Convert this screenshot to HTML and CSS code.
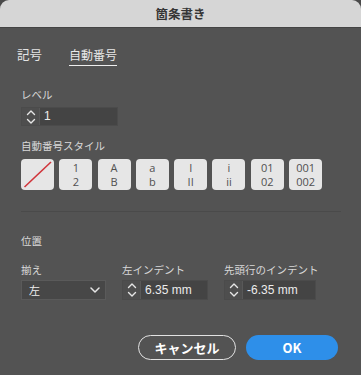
FILE: index.html
```html
<!DOCTYPE html>
<html lang="ja">
<head>
<meta charset="utf-8">
<link rel="stylesheet" href="styles.css">
</head>
<body>
<div class="dialog">
  <div class="titlebar">箇条書き</div>
  <div class="tabs">
    <span class="tab">記号</span>
    <span class="tab active">自動番号</span>
  </div>
  <div class="content">
    <div class="label level-label">レベル</div>
    <div class="stepper level-stepper">
      <span class="arrows"><svg width="10" height="16" viewBox="0 0 10 16"><path d="M1.5 5.5 L5 2 L8.5 5.5 M1.5 10.5 L5 14 L8.5 10.5" fill="none" stroke="#e6e6e6" stroke-width="1.4" stroke-linecap="round" stroke-linejoin="round"/></svg></span>
      <span class="field">1</span>
    </div>
    <div class="label style-label">自動番号スタイル</div>
    <div class="styles">
      <div class="sbtn none"><svg width="33" height="31" viewBox="0 0 33 31"><line x1="3.5" y1="28" x2="30" y2="3" stroke="#d0343a" stroke-width="1.6"/></svg></div>
      <div class="sbtn"><span>1</span><span>2</span></div>
      <div class="sbtn"><span>A</span><span>B</span></div>
      <div class="sbtn"><span>a</span><span>b</span></div>
      <div class="sbtn"><span>I</span><span>II</span></div>
      <div class="sbtn"><span>i</span><span>ii</span></div>
      <div class="sbtn"><span>01</span><span>02</span></div>
      <div class="sbtn"><span>001</span><span>002</span></div>
    </div>
    <div class="divider"></div>
    <div class="label pos-label">位置</div>
    <div class="controls">
      <div class="group">
        <div class="label small">揃え</div>
        <div class="select"><span>左</span><svg width="10" height="6" viewBox="0 0 10 6"><path d="M1 1 L5 5 L9 1" fill="none" stroke="#e6e6e6" stroke-width="1.5" stroke-linecap="round" stroke-linejoin="round"/></svg></div>
      </div>
      <div class="group">
        <div class="label small">左インデント</div>
        <div class="stepper w86">
          <span class="arrows"><svg width="10" height="16" viewBox="0 0 10 16"><path d="M1.5 5.5 L5 2 L8.5 5.5 M1.5 10.5 L5 14 L8.5 10.5" fill="none" stroke="#e6e6e6" stroke-width="1.4" stroke-linecap="round" stroke-linejoin="round"/></svg></span>
          <span class="field">6.35 mm</span>
        </div>
      </div>
      <div class="group">
        <div class="label small">先頭行のインデント</div>
        <div class="stepper w92">
          <span class="arrows"><svg width="10" height="16" viewBox="0 0 10 16"><path d="M1.5 5.5 L5 2 L8.5 5.5 M1.5 10.5 L5 14 L8.5 10.5" fill="none" stroke="#e6e6e6" stroke-width="1.4" stroke-linecap="round" stroke-linejoin="round"/></svg></span>
          <span class="field">-6.35 mm</span>
        </div>
      </div>
    </div>
    <div class="actions">
      <button class="btn cancel">キャンセル</button>
      <button class="btn ok">OK</button>
    </div>
  </div>
</div>
</body>
</html>
```

FILE: styles.css
```css
html, body {
  margin: 0;
  padding: 0;
  background: #4a4a4a;
}
body {
  width: 361px;
  height: 375px;
  overflow: hidden;
  font-family: "Noto Sans CJK JP", "Noto Sans", sans-serif;
}
.dialog {
  width: 361px;
  height: 375px;
  background: #535353;
  border-radius: 9px 9px 0 0;
  overflow: hidden;
}
.titlebar {
  height: 27px;
  line-height: 27px;
  background: #d6d6d6;
  border-bottom: 1px solid #444444;
  text-align: center;
  font-weight: bold;
  font-size: 12.5px;
  color: #353535;
}
.tabs {
  display: flex;
  gap: 27px;
  padding: 18px 0 0 17px;
}
.tab {
  font-size: 12.5px;
  line-height: 17px;
  color: #e4e4e4;
  padding-bottom: 2px;
}
.tab.active {
  border-bottom: 1.5px solid #eeeeee;
  color: #e8e8e8;
  font-size: 12px;
}
.content {
  padding-left: 21px;
}
.label {
  font-size: 10.5px;
  line-height: 14px;
  color: #d8d8d8;
}
.level-label {
  margin-top: 22px;
}
.stepper {
  display: flex;
  height: 19px;
  box-sizing: border-box;
  border: 1px solid #4b4b4b;
  background: #4e4e4e;
}
.level-stepper {
  margin-top: 5px;
  width: 97px;
}
.arrows {
  width: 17px;
  display: flex;
  align-items: center;
  justify-content: center;
  border-right: 1px solid #585858;
}
.field {
  flex: 1;
  background: #444444;
  color: #ececec;
  font-family: "Liberation Sans", Arial, sans-serif;
  font-size: 12px;
  line-height: 17px;
  padding-left: 4px;
}
.style-label {
  margin-top: 13px;
}
.styles {
  display: flex;
  gap: 5.3px;
  margin-top: 6px;
}
.sbtn {
  width: 33px;
  height: 31px;
  background: #e6e6e6;
  border-radius: 4px;
  display: flex;
  flex-direction: column;
  align-items: center;
  justify-content: center;
  font-family: "Open Sans", "Noto Sans", sans-serif;
  font-size: 11px;
  line-height: 14px;
  color: #505050;
}
.sbtn.none svg {
  display: block;
}
.divider {
  margin-top: 21px;
  width: 320px;
  height: 1px;
  background: #4a4a4a;
}
.pos-label {
  margin-top: 22px;
}
.controls {
  display: grid;
  grid-template-columns: 101px 102px auto;
  margin-top: 15px;
}
.label.small {
  margin-bottom: 3px;
}
.select {
  width: 85px;
  height: 20px;
  box-sizing: border-box;
  background: #474747;
  border: 1px solid #5a5a5a;
  display: flex;
  align-items: center;
  justify-content: space-between;
  padding: 0 5px 0 7px;
  color: #eeeeee;
  font-size: 11px;
}
.stepper.w86 { width: 86px; height: 20px; }
.stepper.w92 { width: 92px; height: 20px; }
.stepper.w86 .field, .stepper.w92 .field { line-height: 18px; }
.actions {
  display: flex;
  justify-content: flex-end;
  gap: 10px;
  padding-right: 23px;
  margin-top: 35px;
}
.btn {
  height: 25px;
  border-radius: 13px;
  font-family: "Noto Sans CJK JP", "Noto Sans", sans-serif;
  font-weight: bold;
  font-size: 13px;
  color: #ffffff;
  padding: 0;
}
.btn.cancel {
  width: 98px;
  background: transparent;
  border: 1.5px solid #e2e2e2;
}
.btn.ok {
  width: 92px;
  background: #2e8fe9;
  border: none;
}
```
